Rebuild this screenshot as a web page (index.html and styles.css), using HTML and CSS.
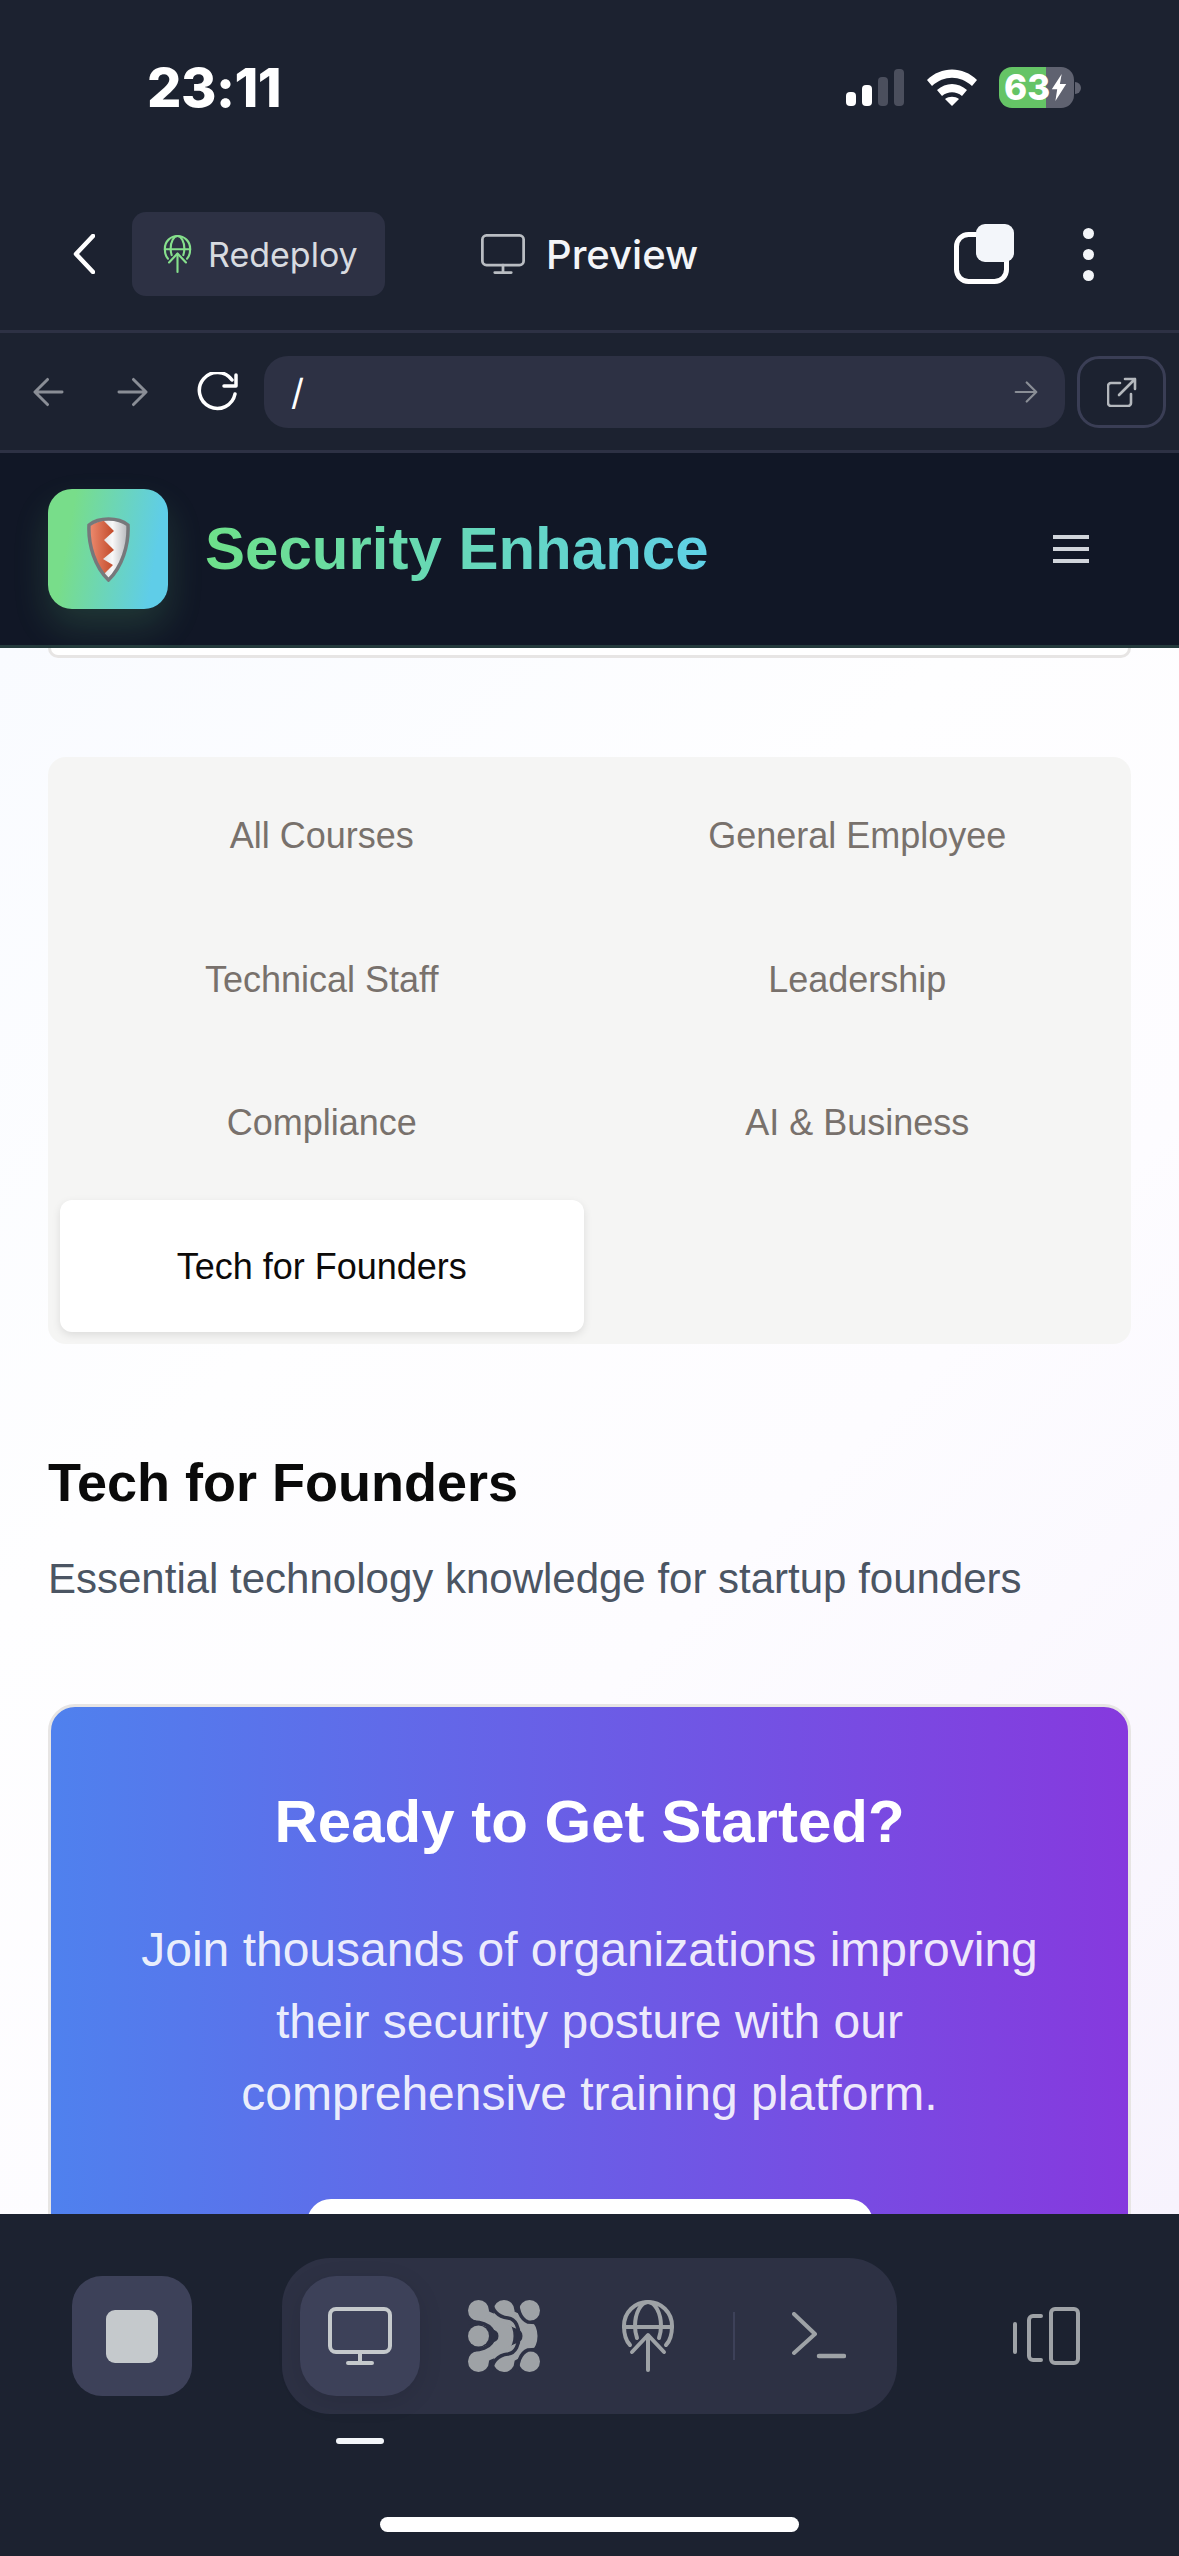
FILE: index.html
```html
<!DOCTYPE html>
<html lang="en">
<head>
    <meta charset="UTF-8">
    <meta name="viewport" content="width=device-width, initial-scale=1.0">
    <title>Security Enhance Preview</title>
    <link rel="stylesheet" href="styles.css">
</head>
<body>

<svg class="sprites" width="0" height="0">
    <symbol id="globe-up" viewBox="0 0 52 72">
        <g fill="none" stroke="currentColor" stroke-width="4" stroke-linecap="round" stroke-linejoin="round">
            <path d="M8 45C3 40 2 33 2 26 2 12 13 2 26 2s24 10 24 24c0 7-1 14-6 19"/>
            <path d="M15 38C13 32 13 30 13 26 13 13 19 2 26 2s13 11 13 24c0 4 0 6-2 12"/>
            <path d="M2 27h48"/>
            <path d="M26 36v34"/>
            <path d="M10 52l16-17 16 17"/>
        </g>
    </symbol>
    <symbol id="monitor" viewBox="0 0 64 58">
        <g fill="none" stroke="currentColor" stroke-width="4" stroke-linecap="round" stroke-linejoin="round">
            <rect x="2" y="2" width="60" height="43" rx="6"/>
            <path d="M32 45v11M20 56h24"/>
        </g>
    </symbol>
    <symbol id="arrow-right" viewBox="0 0 32 30">
        <path d="M2 15h27M17 2l13 13-13 13" fill="none" stroke="currentColor" stroke-width="3" stroke-linecap="round" stroke-linejoin="round"/>
    </symbol>
</svg>

<div class="status-bar">
    <span class="clock">23:11</span>
    <div class="status-icons">
        <div class="signal">
            <span class="bar bar-1"></span>
            <span class="bar bar-2"></span>
            <span class="bar bar-3 off"></span>
            <span class="bar bar-4 off"></span>
        </div>
        <svg class="wifi" viewBox="0 0 50 37">
            <path d="M0 11C14-3 36-3 50 11l-5 6C33 6 17 6 5 17z" fill="#fff"/>
            <path d="M10 21c9-8 21-8 30 0l-5 6c-6-5-14-5-20 0z" fill="#fff"/>
            <path d="M18 30c4-3 10-3 14 0l-7 7z" fill="#fff"/>
        </svg>
        <div class="battery">
            <div class="battery-body">
                <span class="battery-level">63</span>
                <svg class="bolt" viewBox="0 0 16 30"><path d="M11 0L0 17h6L4 30 16 11H9z" fill="#fff"/></svg>
            </div>
            <span class="battery-cap"></span>
        </div>
    </div>
</div>

<div class="nav-bar">
    <svg class="back" viewBox="0 0 22 40">
        <path d="M20 2L3 20l17 18" fill="none" stroke="#fff" stroke-width="4.5" stroke-linecap="round" stroke-linejoin="round"/>
    </svg>
    <div class="redeploy">
        <svg class="redeploy-icon"><use href="#globe-up"/></svg>
        <span>Redeploy</span>
    </div>
    <svg class="preview-icon"><use href="#monitor"/></svg>
    <span class="preview-label">Preview</span>
    <svg class="tabs-icon" viewBox="0 0 60 60">
        <rect x="2.5" y="10.5" width="50" height="47" rx="12" fill="none" stroke="#fff" stroke-width="5"/>
        <rect x="22" y="0" width="38" height="38" rx="9" fill="#f3f6fa"/>
    </svg>
    <div class="more">
        <span></span><span></span><span></span>
    </div>
</div>

<div class="browser-bar">
    <svg class="browser-arrow arrow-back"><use href="#arrow-right"/></svg>
    <svg class="browser-arrow arrow-forward"><use href="#arrow-right"/></svg>
    <svg class="reload" viewBox="0 0 44 40">
        <path d="M37 8A18 18 0 1 0 40 22" fill="none" stroke="#fff" stroke-width="3.5" stroke-linecap="round"/>
        <path d="M41 3v11H29" fill="none" stroke="#fff" stroke-width="3.5" stroke-linecap="round" stroke-linejoin="round"/>
    </svg>
    <div class="url-field">
        <span class="url-text">/</span>
        <svg class="url-go"><use href="#arrow-right"/></svg>
    </div>
    <div class="external">
        <svg viewBox="0 0 30 30">
            <path d="M13 6H4a3 3 0 0 0-3 3v17a3 3 0 0 0 3 3h17a3 3 0 0 0 3-3v-9" fill="none" stroke="#b4b8bd" stroke-width="2.6" stroke-linecap="round"/>
            <path d="M12 18L28 2M18 2h10v10" fill="none" stroke="#b4b8bd" stroke-width="2.6" stroke-linecap="round" stroke-linejoin="round"/>
        </svg>
    </div>
</div>

<header class="site-header">
    <div class="logo">
        <svg viewBox="0 0 43 65" width="43" height="65">
            <defs>
                <linearGradient id="shieldOrange" x1="0" x2="1" y1="0" y2="0">
                    <stop offset="0" stop-color="#ec8a6e"/>
                    <stop offset="1" stop-color="#c24a2a"/>
                </linearGradient>
                <linearGradient id="shieldSilver" x1="0" x2="1" y1="0" y2="0">
                    <stop offset="0" stop-color="#b9bcc0"/>
                    <stop offset="0.6" stop-color="#f8f8f8"/>
                    <stop offset="1" stop-color="#b4b6ba"/>
                </linearGradient>
            </defs>
            <path d="M21.5 2C28 2 36 4 41 8 42 28 35 50 21.5 63 8 50 1 28 2 8 7 4 15 2 21.5 2Z" fill="url(#shieldSilver)"/>
            <path d="M17 4L27 14 17 23 27 33 16 42 26 48 16 58C8 48 2 28 3 9 7 6 12 4 17 4Z" fill="url(#shieldOrange)"/>
            <path d="M21.5 2C28 2 36 4 41 8 42 28 35 50 21.5 63 8 50 1 28 2 8 7 4 15 2 21.5 2Z" fill="none" stroke="#76787b" stroke-width="3.500"/>
        </svg>
    </div>
    <span class="brand">Security Enhance</span>
    <div class="hamburger">
        <span></span><span></span><span></span>
    </div>
</header>

<main class="page">
    <div class="card-end"></div>

    <div class="tabs">
        <div class="tab">All Courses</div>
        <div class="tab">General Employee</div>
        <div class="tab">Technical Staff</div>
        <div class="tab">Leadership</div>
        <div class="tab">Compliance</div>
        <div class="tab">AI &amp; Business</div>
        <div class="tab active">Tech for Founders</div>
    </div>

    <h2 class="section-title">Tech for Founders</h2>
    <p class="section-sub">Essential technology knowledge for startup founders</p>

    <section class="cta">
        <h2>Ready to Get Started?</h2>
        <p>Join thousands of organizations improving their security posture with our comprehensive training platform.</p>
        <div class="cta-button"></div>
    </section>
</main>

<div class="bottom-bar">
    <div class="toolbar">
        <div class="stop"><span></span></div>
        <div class="modes">
            <div class="mode active">
                <svg class="mode-monitor"><use href="#monitor"/></svg>
            </div>
            <svg class="mode-dots" viewBox="0 0 72 72">
                <g fill="none" stroke="#9ea2a6" stroke-width="15" stroke-linecap="round">
                    <path d="M10 10C14 24 38 18 38 36 38 54 14 48 10 62"/>
                    <path d="M36 10C40 24 62 18 62 36 62 54 40 48 36 62"/>
                </g>
                <g fill="#9ea2a6">
                    <ellipse cx="10.500" cy="10.500" rx="10.500" ry="10.500"/>
                    <ellipse cx="36" cy="10.500" rx="10.500" ry="10.500"/>
                    <ellipse cx="61.500" cy="10.500" rx="10.500" ry="10.500"/>
                    <ellipse cx="10.500" cy="61.500" rx="10.500" ry="10.500"/>
                    <ellipse cx="36" cy="61.500" rx="10.500" ry="10.500"/>
                    <ellipse cx="61.500" cy="61.500" rx="10.500" ry="10.500"/>
                </g>
                <!-- the dark channels between the blobs -->
                <g fill="none" stroke="#2d3144" stroke-width="3.500">
                    <path d="M23-2C23 10 30 17 40 18 48 19 51 28 51 36 51 44 48 53 40 54 30 55 23 62 23 74"/>
                    <path d="M49-2C49 8 52 19 60 22L76 23"/>
                    <path d="M49 74C49 64 52 53 60 50L76 49"/>
                    <path d="M-2 23C10 20 25 24 26 36 25 48 10 52-2 49"/>
                </g>
                <ellipse cx="10.500" cy="36" rx="10.500" ry="10.500" fill="#9ea2a6"/>
            </svg>
            <svg class="mode-globe"><use href="#globe-up"/></svg>
            <span class="modes-divider"></span>
            <svg class="mode-terminal" viewBox="0 0 54 48">
                <path d="M2 2l21 20L2 41" fill="none" stroke="#9ea2a6" stroke-width="4" stroke-linecap="round" stroke-linejoin="round"/>
                <path d="M27 44h25" fill="none" stroke="#9ea2a6" stroke-width="4.500" stroke-linecap="round"/>
            </svg>
        </div>
        <svg class="device-toggle" viewBox="0 0 67 58">
            <path d="M2 17v28" fill="none" stroke="#9ea2a6" stroke-width="4" stroke-linecap="round"/>
            <path d="M28 9h-8a4 4 0 0 0-4 4v36a4 4 0 0 0 4 4h8" fill="none" stroke="#9ea2a6" stroke-width="4" stroke-linecap="round"/>
            <rect x="38" y="2" width="27" height="54" rx="4" fill="none" stroke="#9ea2a6" stroke-width="4"/>
        </svg>
    </div>
    <span class="mode-indicator"></span>
    <span class="home-indicator"></span>
</div>

</body>
</html>
```

FILE: styles.css
```css
* {
    box-sizing: border-box;
}

html, body {
    margin: 0;
    padding: 0;
}

body {
    width: 1179px;
    height: 2556px;
    overflow: hidden;
    display: flex;
    flex-direction: column;
    background: #1c2230;
    font-family: "Liberation Sans", Arial, sans-serif;
}

.sprites {
    position: absolute;
}

svg {
    display: block;
    flex: none;
}

/* Status bar */
.status-bar {
    height: 178px;
    flex: none;
    display: flex;
    justify-content: space-between;
    align-items: flex-start;
    padding: 57px 98px 0 147px;
    font-family: Inter, "Noto Sans", sans-serif;
}

.clock {
    color: #fff;
    font-size: 54px;
    line-height: 62px;
    font-weight: 800;
    letter-spacing: -0.5px;
}

.status-icons {
    display: flex;
    align-items: flex-start;
    padding-top: 10px;
}

.signal {
    display: flex;
    align-items: flex-end;
    gap: 6px;
    height: 37px;
    margin-top: 2px;
}

.bar {
    width: 10px;
    background: #fff;
    border-radius: 4px;
}

.bar.off {
    background: #4b4f5d;
}

.bar-1 { height: 14px; }
.bar-2 { height: 21px; }
.bar-3 { height: 29px; }
.bar-4 { height: 37px; }

.wifi {
    width: 50px;
    height: 37px;
    margin: 2px 22px 0 23px;
}

.battery {
    display: flex;
    align-items: center;
}

.battery-body {
    width: 75px;
    height: 41px;
    border-radius: 13px;
    background: linear-gradient(90deg, #65c466 47px, #5f6270 47px);
    display: flex;
    align-items: center;
    padding-left: 5px;
}

.battery-level {
    color: #fff;
    font-size: 35px;
    font-weight: 800;
    line-height: 41px;
}

.bolt {
    width: 16px;
    height: 27px;
    margin-left: 1px;
}

.battery-cap {
    width: 6px;
    height: 12px;
    margin-left: 1px;
    background: #5f6270;
    border-radius: 0 6px 6px 0;
}

/* App nav */
.nav-bar {
    height: 155px;
    flex: none;
    display: flex;
    align-items: center;
    padding: 0 85px 0 73px;
    border-bottom: 3px solid #2d3144;
}

.back {
    width: 22px;
    height: 40px;
}

.redeploy {
    width: 253px;
    height: 84px;
    margin-left: 37px;
    padding-left: 31px;
    display: flex;
    align-items: center;
    gap: 16px;
    background: #2d3144;
    border-radius: 14px;
    color: #d8dbe0;
    font-family: Inter, "Noto Sans", sans-serif;
    font-size: 34px;
}

.redeploy-icon {
    width: 29px;
    height: 38px;
    color: #86e08c;
}

.preview-icon {
    width: 44px;
    height: 40px;
    margin-left: 96px;
    color: #b9bdc2;
}

.preview-label {
    margin-left: 21px;
    color: #f3f5f8;
    font-family: Inter, "Noto Sans", sans-serif;
    font-size: 40px;
    font-weight: 500;
}

.tabs-icon {
    width: 60px;
    height: 60px;
    margin-left: auto;
}

.more {
    margin-left: 69px;
    display: flex;
    flex-direction: column;
    gap: 10px;
}

.more span {
    width: 11px;
    height: 11px;
    background: #f3f5f8;
    border-radius: 50%;
}

/* Browser address row */
.browser-bar {
    height: 120px;
    flex: none;
    display: flex;
    align-items: center;
    padding: 0 13px 0 33px;
    border-bottom: 3px solid #2d3144;
}

.browser-arrow {
    width: 31px;
    height: 30px;
    color: #8a8e96;
}

.arrow-back {
    transform: scaleX(-1);
}

.arrow-forward {
    margin-left: 53px;
}

.reload {
    width: 44px;
    height: 40px;
    margin-left: 47px;
}

.url-field {
    width: 801px;
    height: 72px;
    margin-left: 25px;
    padding: 0 27px;
    display: flex;
    align-items: center;
    justify-content: space-between;
    background: #2d3144;
    border-radius: 24px;
}

.url-text {
    color: #fff;
    font-family: Inter, "Noto Sans", sans-serif;
    font-size: 36px;
}

.url-go {
    width: 24px;
    height: 22px;
    color: #8a8e96;
}

.external {
    width: 89px;
    height: 72px;
    margin-left: 12px;
    display: flex;
    align-items: center;
    justify-content: center;
    border: 3px solid #3a3e55;
    border-radius: 22px;
}

.external svg {
    width: 30px;
    height: 30px;
}

/* Site header */
.site-header {
    height: 195px;
    flex: none;
    display: flex;
    align-items: center;
    padding: 0 90px 0 48px;
    background: #111726;
    border-bottom: 3px solid #243a3c;
}

.logo {
    width: 120px;
    height: 120px;
    display: flex;
    align-items: center;
    justify-content: center;
    border-radius: 24px;
    background: linear-gradient(100deg, #78dd8a 20%, #5fcde8 85%);
    box-shadow: 0 18px 36px rgba(110, 224, 138, 0.16);
}

.brand {
    margin-left: 37px;
    font-size: 60px;
    font-weight: 700;
    line-height: 72px;
    background: linear-gradient(90deg, #6ee08a, #5fd0e6);
    -webkit-background-clip: text;
    background-clip: text;
    color: transparent;
}

.hamburger {
    margin-left: auto;
    display: flex;
    flex-direction: column;
    gap: 8px;
}

.hamburger span {
    width: 36px;
    height: 4px;
    background: #d1d5db;
}

/* Page content */
.page {
    flex: 1;
    min-height: 0;
    overflow: hidden;
    padding: 0 48px;
    background: linear-gradient(135deg, #f9fbff 0%, #fefeff 35%, #fdfcff 60%, #f7f3fd 100%);
}

.card-end {
    height: 10px;
    background: #fff;
    border: 3px solid #e7e5e4;
    border-top: 0;
    border-radius: 0 0 24px 24px;
}

.tabs {
    margin-top: 99px;
    padding: 12px;
    display: grid;
    grid-template-columns: 1fr 1fr;
    gap: 11.500px 12px;
    background: #f5f5f4;
    border-radius: 18px;
}

.tab {
    height: 132px;
    padding-top: 2px;
    display: flex;
    align-items: center;
    justify-content: center;
    color: #78716c;
    font-size: 36px;
    border-radius: 12px;
}

.tab.active {
    background: #fff;
    color: #0c0a09;
    box-shadow: 0 3px 9px rgba(0, 0, 0, 0.1);
}

.section-title {
    margin: 102px 0 0;
    color: #0a0a0a;
    font-size: 54px;
    line-height: 72px;
    font-weight: 700;
}

.section-sub {
    margin: 29px 0 0;
    color: #4b5563;
    font-size: 42px;
    line-height: 64px;
}

.cta {
    margin-top: 93px;
    padding: 79px 72px 0;
    border: 3px solid #e7e5e4;
    border-radius: 27px;
    background: linear-gradient(90deg, #4f81ee, #8639de);
    text-align: center;
}

.cta h2 {
    margin: 0;
    color: #fff;
    font-size: 60px;
    line-height: 72px;
    font-weight: 700;
}

.cta p {
    margin: 56px 0 0;
    color: rgba(255, 255, 255, 0.9);
    font-size: 48px;
    line-height: 72px;
}

.cta-button {
    width: 566px;
    height: 132px;
    margin: 69px auto 0;
    background: #fff;
    border-radius: 24px;
}

/* Bottom toolbar */
.bottom-bar {
    height: 342px;
    flex: none;
    display: flex;
    flex-direction: column;
    background: #1c2230;
}

.toolbar {
    margin-top: 44px;
    height: 156px;
    display: flex;
    align-items: center;
    padding: 0 99px 0 72px;
}

.stop {
    width: 120px;
    height: 120px;
    display: flex;
    align-items: center;
    justify-content: center;
    background: #3d4159;
    border-radius: 30px;
}

.stop span {
    width: 52px;
    height: 53px;
    background: #c5c9cc;
    border-radius: 9px;
}

.modes {
    width: 615px;
    height: 156px;
    margin-left: 90px;
    padding-left: 18px;
    display: flex;
    align-items: center;
    background: #2d3144;
    border-radius: 48px;
}

.mode {
    width: 120px;
    height: 120px;
    display: flex;
    align-items: center;
    justify-content: center;
    border-radius: 36px;
}

.mode.active {
    background: #3d4159;
    box-shadow: 0 6px 24px rgba(0, 0, 0, 0.1);
    color: #c5c9cc;
}

.mode-monitor {
    width: 64px;
    height: 58px;
}

.mode-dots {
    width: 72px;
    height: 72px;
    margin-left: 48px;
}

.mode-globe {
    width: 52px;
    height: 72px;
    margin-left: 82px;
    color: #9ea2a6;
}

.modes-divider {
    width: 2px;
    height: 48px;
    margin-left: 59px;
    background: #3d4159;
}

.mode-terminal {
    width: 54px;
    height: 48px;
    margin-left: 57px;
}

.device-toggle {
    width: 67px;
    height: 58px;
    margin-left: auto;
}

.mode-indicator {
    width: 48px;
    height: 6px;
    margin: 24px 0 0 336px;
    background: #f3f6fa;
    border-radius: 3px;
}

.home-indicator {
    width: 419px;
    height: 15px;
    margin: 73px 0 0 380px;
    background: #fff;
    border-radius: 8px;
}
```
